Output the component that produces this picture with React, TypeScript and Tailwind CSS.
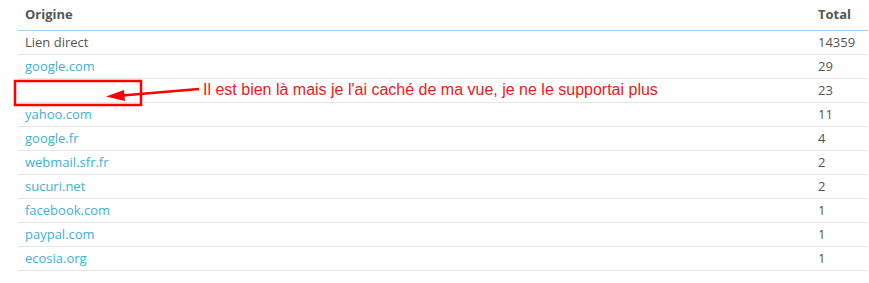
const rows: Array<{ origin: string; total: number; link: boolean }> = [
  { origin: "Lien direct", total: 14359, link: false },
  { origin: "google.com", total: 29, link: true },
  { origin: "", total: 23, link: true },
  { origin: "yahoo.com", total: 11, link: true },
  { origin: "google.fr", total: 4, link: true },
  { origin: "webmail.sfr.fr", total: 2, link: true },
  { origin: "sucuri.net", total: 2, link: true },
  { origin: "facebook.com", total: 1, link: true },
  { origin: "paypal.com", total: 1, link: true },
  { origin: "ecosia.org", total: 1, link: true },
];

export default function App() {
  return (
    <div className="relative w-[869px] h-[283px] bg-white font-['Open_Sans',sans-serif] text-[13px] text-[#555]">
      <div className="ml-[18px] w-[850px]">
        <div className="flex h-[31px] items-center border-b border-[#9fd0ee] pb-[1px] font-bold">
          <div className="flex-1 pl-[7px]">Origine</div>
          <div className="w-[50px]">Total</div>
        </div>
        {rows.map((row, i) => (
          <div key={i} className="flex h-[24px] items-center border-b border-[#e6e6e6]">
            <div className={`flex-1 pl-[7px] ${row.link ? "text-[#3eb0d8]" : ""}`}>{row.origin}</div>
            <div className="w-[50px]">{row.total}</div>
          </div>
        ))}
      </div>

      {/* annotation */}
      <svg className="absolute left-0 top-0" width="869" height="283">
        <rect x="15" y="81" width="126" height="24" fill="none" stroke="#ff0000" strokeWidth="2.5" />
        <line x1="199" y1="89" x2="122" y2="95.5" stroke="#ff0000" strokeWidth="2.5" />
        <polygon points="106,96.5 124,90 125,101" fill="#ff0000" />
      </svg>
      <div className="absolute left-[203px] top-[80px] font-['Liberation_Sans',Arial,sans-serif] text-[16px] leading-[20px] text-[#f01818]">
        Il est bien là mais je l'ai caché de ma vue, je ne le supportai plus
      </div>
    </div>
  );
}
